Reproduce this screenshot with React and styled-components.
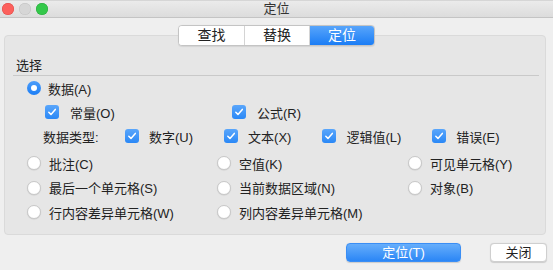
import React, { useState } from 'react';
import styled, { createGlobalStyle } from 'styled-components';

const GlobalStyle = createGlobalStyle`
  html, body {
    margin: 0;
    padding: 0;
    background: #ececec;
  }
  body {
    font-family: "Liberation Sans", "Noto Sans CJK SC", sans-serif;
    font-size: 13px;
    color: #222;
  }
`;

const Window = styled.div`
  width: 553px;
  height: 270px;
  background: #efefef;
  display: flex;
  flex-direction: column;
  overflow: hidden;
`;

const TitleBar = styled.div`
  display: grid;
  grid-template-columns: 1fr auto 1fr;
  align-items: center;
  background: linear-gradient(#ebebeb, #dcdcdc);
  border-top: 1px solid #d6d6d6;
  border-bottom: 1px solid #c4c4c4;
  box-sizing: border-box;
  height: 18px;
`;

const Lights = styled.div`
  display: flex;
  gap: 5px;
  padding-left: 2px;
`;

const Light = styled.span`
  width: 12px;
  height: 12px;
  border-radius: 50%;
  background: ${p => p.color};
  box-shadow: inset 0 0 0 0.5px ${p => p.edge};
`;

const Title = styled.div`
  font-size: 13px;
  color: #333;
  line-height: 16px;
`;

const Body = styled.div`
  flex: 1;
  display: flex;
  flex-direction: column;
`;

const Tabs = styled.div`
  position: relative;
  z-index: 1;
  align-self: center;
  margin-top: 7px;
  display: flex;
  height: 21px;
  box-sizing: border-box;
  background: #fff;
  border: 1px solid #c4c4c4;
  border-radius: 4px;
  overflow: hidden;
  box-shadow: 0 0.5px 1px rgba(0,0,0,0.08);
`;

const Tab = styled.button`
  width: 65px;
  height: 100%;
  border: none;
  padding: 0;
  margin: 0;
  font: inherit;
  font-size: 14px;
  line-height: 19px;
  cursor: pointer;
  color: ${p => p.active ? '#fff' : '#222'};
  background: ${p => p.active ? 'linear-gradient(#58a5fb, #1b7df5)' : '#fff'};
  border-left: ${p => p.first ? 'none' : '1px solid #d4d4d4'};
`;

const Panel = styled.div`
  margin: -11px 7px 0 4px;
  height: 200px;
  box-sizing: border-box;
  background: #e6e6e6;
  border: 1px solid #dadada;
  border-radius: 4px;
  padding: 21px 6px 0 8px;
  display: flex;
  flex-direction: column;
`;

const Header = styled.div`
  line-height: 18px;
  padding-left: 3px;
  border-bottom: 1px solid #c9c9c9;
  color: #222;
`;

const Row = styled.div`
  display: flex;
  align-items: center;
  height: 24px;
  padding-left: ${p => p.indent}px;
`;

const RadioGrid = styled.div`
  display: grid;
  grid-template-columns: 190px 191px 1fr;
  grid-auto-rows: 24.5px;
  padding-left: 14px;
  margin-top: 3px;
`;

const Option = styled.label`
  display: flex;
  align-items: center;
  gap: ${p => p.gap || 8}px;
  width: ${p => p.width ? p.width + 'px' : 'auto'};
  cursor: pointer;
  white-space: nowrap;
`;

const RadioDot = styled.span`
  width: 14px;
  height: 14px;
  box-sizing: border-box;
  border-radius: 50%;
  flex-shrink: 0;
  display: flex;
  align-items: center;
  justify-content: center;
  background: ${p => p.on ? 'linear-gradient(#4d9dfa, #1c7ef5)' : '#fff'};
  border: ${p => p.on ? 'none' : '1px solid #c8c8c8'};
  box-shadow: ${p => p.on ? 'none' : '0 0.5px 1px rgba(0,0,0,0.12)'};

  &::after {
    content: '';
    display: ${p => p.on ? 'block' : 'none'};
    width: 6px;
    height: 6px;
    border-radius: 50%;
    background: #fff;
  }
`;

const CheckBox = styled.span`
  width: 14px;
  height: 14px;
  border-radius: 3px;
  flex-shrink: 0;
  display: flex;
  align-items: center;
  justify-content: center;
  background: linear-gradient(#5aa6fb, #2a88f6);
`;

const TypeLabel = styled.span`
  width: 82px;
`;

const TypeGroup = styled.div`
  display: flex;
  align-items: center;
  gap: 31px;
`;

const Footer = styled.div`
  display: flex;
  justify-content: flex-end;
  gap: 29px;
  margin: 8px 6px 0 0;
`;

const Button = styled.button`
  width: ${p => p.w}px;
  height: 19px;
  padding: 0;
  font: inherit;
  font-size: 13px;
  line-height: 17px;
  border-radius: 4px;
  cursor: pointer;
  color: ${p => p.primary ? '#fff' : '#222'};
  background: ${p => p.primary ? 'linear-gradient(#66aefb, #2b86f6)' : '#fff'};
  border: 1px solid ${p => p.primary ? '#3a8ef5' : '#cfcfcf'};
  box-shadow: 0 0.5px 1px rgba(0,0,0,0.15);
`;

function Check() {
  return (
    <CheckBox>
      <svg width="10" height="10" viewBox="0 0 10 10">
        <path d="M1.8 5.2 L4 7.4 L8.3 2.4" fill="none" stroke="#fff" strokeWidth="1.5" strokeLinecap="round" strokeLinejoin="round" />
      </svg>
    </CheckBox>
  );
}

const radios = [
  '批注(C)', '空值(K)', '可见单元格(Y)',
  '最后一个单元格(S)', '当前数据区域(N)', '对象(B)',
  '行内容差异单元格(W)', '列内容差异单元格(M)',
];

const types = ['数字(U)', '文本(X)', '逻辑值(L)', '错误(E)'];

export default function App() {
  const [tab, setTab] = useState(2);
  const tabs = ['查找', '替换', '定位'];

  return (
    <Window>
      <GlobalStyle />
      <TitleBar>
        <Lights>
          <Light color="#fc605c" edge="#de4a46" />
          <Light color="#d6d6d6" edge="#c2c2c2" />
          <Light color="#34c84a" edge="#2aa83d" />
        </Lights>
        <Title>定位</Title>
        <div />
      </TitleBar>
      <Body>
        <Tabs>
          {tabs.map((t, i) => (
            <Tab key={t} first={i === 0} active={i === tab} onClick={() => setTab(i)}>{t}</Tab>
          ))}
        </Tabs>
        <Panel>
          <Header>选择</Header>
          <Row indent={14}>
            <Option gap={7}><RadioDot on />数据(A)</Option>
          </Row>
          <Row indent={32}>
            <Option gap={11} width={187}><Check />常量(O)</Option>
            <Option gap={11}><Check />公式(R)</Option>
          </Row>
          <Row indent={30}>
            <TypeLabel>数据类型:</TypeLabel>
            <TypeGroup>
              {types.map(t => (
                <Option key={t} gap={10}><Check />{t}</Option>
              ))}
            </TypeGroup>
          </Row>
          <RadioGrid>
            {radios.map(r => (
              <Option key={r} gap={8}><RadioDot />{r}</Option>
            ))}
          </RadioGrid>
        </Panel>
        <Footer>
          <Button primary w={115}>定位(T)</Button>
          <Button w={57}>关闭</Button>
        </Footer>
      </Body>
    </Window>
  );
}
